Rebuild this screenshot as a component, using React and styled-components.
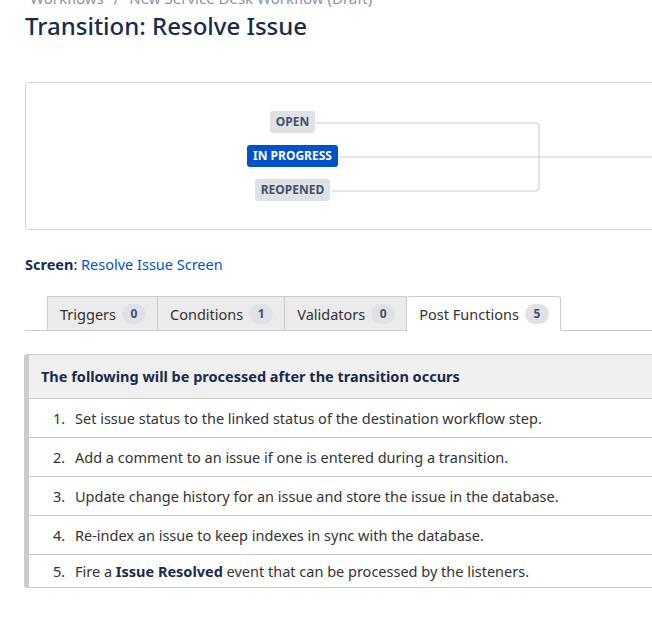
import React from 'react';
import styled, { createGlobalStyle } from 'styled-components';

const GlobalStyle = createGlobalStyle`
  html, body {
    margin: 0;
    padding: 0;
    background: #ffffff;
    overflow: hidden;
  }

  body {
    font-family: "Noto Sans", "Open Sans", Arial, sans-serif;
    color: #172b4d;
  }
`;

const Page = styled.div`
  width: 652px;
  height: 626px;
  overflow: hidden;
  padding-left: 25px;
  box-sizing: border-box;
`;

const Breadcrumbs = styled.div`
  margin-top: -10px;
  padding-left: 5px;
  font-size: 15px;
  line-height: 16px;
  color: #8993a4;
  white-space: nowrap;

  span {
    margin: 0 10px;
  }
`;

const Title = styled.h1`
  margin: 5px 0 0;
  font-size: 24px;
  line-height: 30px;
  font-weight: 500;
  color: #172b4d;
  white-space: nowrap;
`;

const Diagram = styled.div`
  position: relative;
  margin-top: 41px;
  width: 700px;
  height: 148px;
  box-sizing: border-box;
  border: 1px solid #cfd2d6;
  border-radius: 4px;
  padding: 28px 0 0 220px;
`;

const Connectors = styled.svg`
  position: absolute;
  left: 0;
  top: 0;
  width: 100%;
  height: 100%;
  pointer-events: none;
`;

const StatusColumn = styled.div`
  position: relative;
  display: flex;
  flex-direction: column;
  align-items: center;
  gap: 12px;
  width: 93px;
`;

const Lozenge = styled.span`
  display: inline-block;
  height: 22px;
  line-height: 22px;
  padding: 0 6px;
  border-radius: 3px;
  font-size: 12px;
  font-weight: 700;
  text-transform: uppercase;
  white-space: nowrap;
  background: ${p => (p.$current ? '#0052cc' : '#dfe1e6')};
  color: ${p => (p.$current ? '#ffffff' : '#42526e')};
`;

const ScreenLine = styled.div`
  margin-top: 24px;
  font-size: 14.5px;
  line-height: 20px;

  b {
    font-weight: 700;
    color: #172b4d;
  }
`;

const Link = styled.a`
  color: #0052cc;
  text-decoration: none;
`;

const TabBar = styled.div`
  display: flex;
  margin-top: 22px;
  padding-left: 22px;
  width: 700px;
  border-bottom: 1px solid #cccccc;
`;

const Tab = styled.div`
  display: flex;
  align-items: center;
  gap: 6px;
  height: 33px;
  padding: 0 11px 0 12px;
  margin-bottom: -1px;
  font-size: 14.5px;
  color: #333333;
  background: ${p => (p.$active ? '#ffffff' : '#ebebeb')};
  border: 1px solid #cccccc;
  border-bottom-color: ${p => (p.$active ? '#ffffff' : '#cccccc')};
  border-left-width: ${p => (p.$first ? '1px' : '0')};
  border-radius: ${p => (p.$active ? '3px 3px 0 0' : '0')};
  white-space: nowrap;
`;

const Badge = styled.span`
  display: inline-block;
  min-width: 24px;
  height: 20px;
  line-height: 20px;
  padding: 0 4px;
  box-sizing: border-box;
  border-radius: 10px;
  background: #dfe1e6;
  color: #42526e;
  font-size: 12px;
  font-weight: 700;
  text-align: center;
`;

const FunctionTable = styled.div`
  margin-top: 23px;
  margin-left: -1px;
  width: 700px;
  border: 1px solid #cccccc;
  border-left: 5px solid #cccccc;
  border-radius: 3px;
  overflow: hidden;
`;

const TableHeader = styled.div`
  height: 43px;
  line-height: 43px;
  padding-left: 12px;
  background: #f0f0f0;
  font-size: 14.5px;
  font-weight: 700;
  color: #172b4d;
  border-bottom: 1px solid #cccccc;
`;

const Steps = styled.ol`
  margin: 0;
  padding: 0;
  list-style: none;
  counter-reset: step;
`;

const Step = styled.li`
  counter-increment: step;
  height: 38px;
  line-height: 38px;
  padding-left: 24px;
  font-size: 14.5px;
  color: #333333;
  border-top: 1px solid #cccccc;
  white-space: nowrap;

  &:first-child {
    border-top: 0;
  }

  &:last-child {
    height: 32px;
    line-height: 32px;
  }

  &::before {
    content: counter(step) ".";
    display: inline-block;
    width: 22px;
  }

  b {
    color: #172b4d;
  }
`;

const steps = [
  'Set issue status to the linked status of the destination workflow step.',
  'Add a comment to an issue if one is entered during a transition.',
  'Update change history for an issue and store the issue in the database.',
  'Re-index an issue to keep indexes in sync with the database.',
];

const tabs = [
  { label: 'Triggers', count: 0 },
  { label: 'Conditions', count: 1 },
  { label: 'Validators', count: 0 },
  { label: 'Post Functions', count: 5, active: true },
];

const App = () => (
  <Page>
    <GlobalStyle />
    <Breadcrumbs>
      Workflows<span>/</span>New Service Desk Workflow (Draft)
    </Breadcrumbs>
    <Title>Transition: Resolve Issue</Title>

    <Diagram>
      <Connectors>
        <path
          d="M289 40 H510 Q513 40 513 43 V105 Q513 108 510 108 H306"
          fill="none"
          stroke="#c8cbd0"
          strokeWidth="1"
        />
        <path d="M314 74 H700" stroke="#c8cbd0" strokeWidth="1" />
      </Connectors>
      <StatusColumn>
        <Lozenge>Open</Lozenge>
        <Lozenge $current>In Progress</Lozenge>
        <Lozenge>Reopened</Lozenge>
      </StatusColumn>
    </Diagram>

    <ScreenLine>
      <b>Screen</b>: <Link href="#">Resolve Issue Screen</Link>
    </ScreenLine>

    <TabBar>
      {tabs.map((t, i) => (
        <Tab key={t.label} $active={t.active} $first={i === 0}>
          {t.label}
          <Badge>{t.count}</Badge>
        </Tab>
      ))}
    </TabBar>

    <FunctionTable>
      <TableHeader>The following will be processed after the transition occurs</TableHeader>
      <Steps>
        {steps.map(s => (
          <Step key={s}>{s}</Step>
        ))}
        <Step>
          Fire a <b>Issue Resolved</b> event that can be processed by the listeners.
        </Step>
      </Steps>
    </FunctionTable>
  </Page>
);

export default App;
